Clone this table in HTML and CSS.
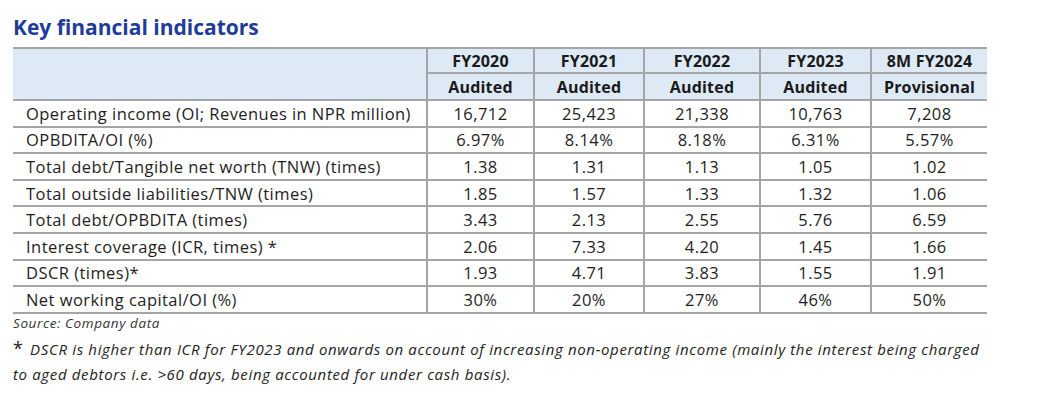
FILE: index.html
```html
<!DOCTYPE html>
<html lang="en">
<head>
<meta charset="utf-8">
<title>Key financial indicators</title>
<link rel="stylesheet" href="styles.css">
</head>
<body>
<div class="page">
  <h2 class="title">Key financial indicators</h2>
  <table class="fin">
    <colgroup>
      <col class="c-label">
      <col class="c-a">
      <col class="c-b">
      <col class="c-c">
      <col class="c-d">
      <col class="c-e">
    </colgroup>
    <thead>
      <tr class="h1">
        <th class="blank" rowspan="2"></th>
        <th>FY2020</th><th>FY2021</th><th>FY2022</th><th>FY2023</th><th>8M FY2024</th>
      </tr>
      <tr class="h2">
        <th>Audited</th><th>Audited</th><th>Audited</th><th>Audited</th><th>Provisional</th>
      </tr>
    </thead>
    <tbody>
      <tr><td>Operating income (OI; Revenues in NPR million)</td><td>16,712</td><td>25,423</td><td>21,338</td><td>10,763</td><td>7,208</td></tr>
      <tr><td>OPBDITA/OI (%)</td><td>6.97%</td><td>8.14%</td><td>8.18%</td><td>6.31%</td><td>5.57%</td></tr>
      <tr><td>Total debt/Tangible net worth (TNW) (times)</td><td>1.38</td><td>1.31</td><td>1.13</td><td>1.05</td><td>1.02</td></tr>
      <tr><td>Total outside liabilities/TNW (times)</td><td>1.85</td><td>1.57</td><td>1.33</td><td>1.32</td><td>1.06</td></tr>
      <tr><td>Total debt/OPBDITA (times)</td><td>3.43</td><td>2.13</td><td>2.55</td><td>5.76</td><td>6.59</td></tr>
      <tr><td>Interest coverage (ICR, times) *</td><td>2.06</td><td>7.33</td><td>4.20</td><td>1.45</td><td>1.66</td></tr>
      <tr><td>DSCR (times)*</td><td>1.93</td><td>4.71</td><td>3.83</td><td>1.55</td><td>1.91</td></tr>
      <tr><td>Net working capital/OI (%)</td><td>30%</td><td>20%</td><td>27%</td><td>46%</td><td>50%</td></tr>
    </tbody>
  </table>
  <p class="source">Source: Company data</p>
  <p class="note"><span class="star">*</span> DSCR is higher than ICR for FY2023 and onwards on account of increasing non-operating income (mainly the interest being charged<br>to aged debtors i.e. &gt;60 days, being accounted for under cash basis).</p>
</div>
</body>
</html>
```

FILE: styles.css
```css
html, body {
  margin: 0;
  padding: 0;
  background: #ffffff;
}

.page {
  padding: 13px 0 0 13px;
  font-family: "Open Sans", Lato, "Liberation Sans", sans-serif;
  color: #1e1e1e;
}

.title {
  margin: 0 0 6px 0;
  font-size: 21px;
  line-height: 28px;
  font-weight: 700;
  color: #1f3c99;
}

.fin {
  border-collapse: collapse;
  table-layout: fixed;
  width: 974px;
  font-size: 16.5px;
}

.c-label { width: 414px; }
.c-a { width: 107px; }
.c-b { width: 110px; }
.c-c { width: 116px; }
.c-d { width: 111px; }
.c-e { width: 116px; }

.fin th, .fin td {
  padding: 0;
  text-align: center;
  white-space: nowrap;
  border-bottom: 2px solid #a5a5a5;
  border-left: 2px solid #a5a5a5;
}

.fin th:first-child, .fin td:first-child {
  border-left: none;
}

.fin thead tr.h1 th {
  border-top: 2px solid #a5a5a5;
}

.fin thead th {
  background: #dde9f5;
  font-weight: 700;
  font-size: 16px;
  color: #1a1a1a;
  letter-spacing: 0.2px;
}

.fin thead tr.h2 th:first-child {
  border-left: 2px solid #a5a5a5;
}

.fin tr.h1 { height: 25px; }
.fin tr.h2 { height: 27px; }

.fin tbody tr { height: 26.6px; }

.fin tbody td {
  letter-spacing: 0.45px;
}

.fin tbody td:first-child {
  text-align: left;
  padding-left: 13px;
}

.source {
  margin: 0;
  font-size: 13.5px;
  line-height: 18px;
  font-style: italic;
  color: #333333;
  letter-spacing: 0.6px;
}

.note {
  margin: 5px 0 0 0;
  font-size: 15px;
  line-height: 25px;
  font-style: italic;
  color: #222222;
  letter-spacing: 0.65px;
}

.note .star {
  font-style: normal;
  font-size: 18px;
  line-height: 1;
  margin-right: 2px;
}
```
